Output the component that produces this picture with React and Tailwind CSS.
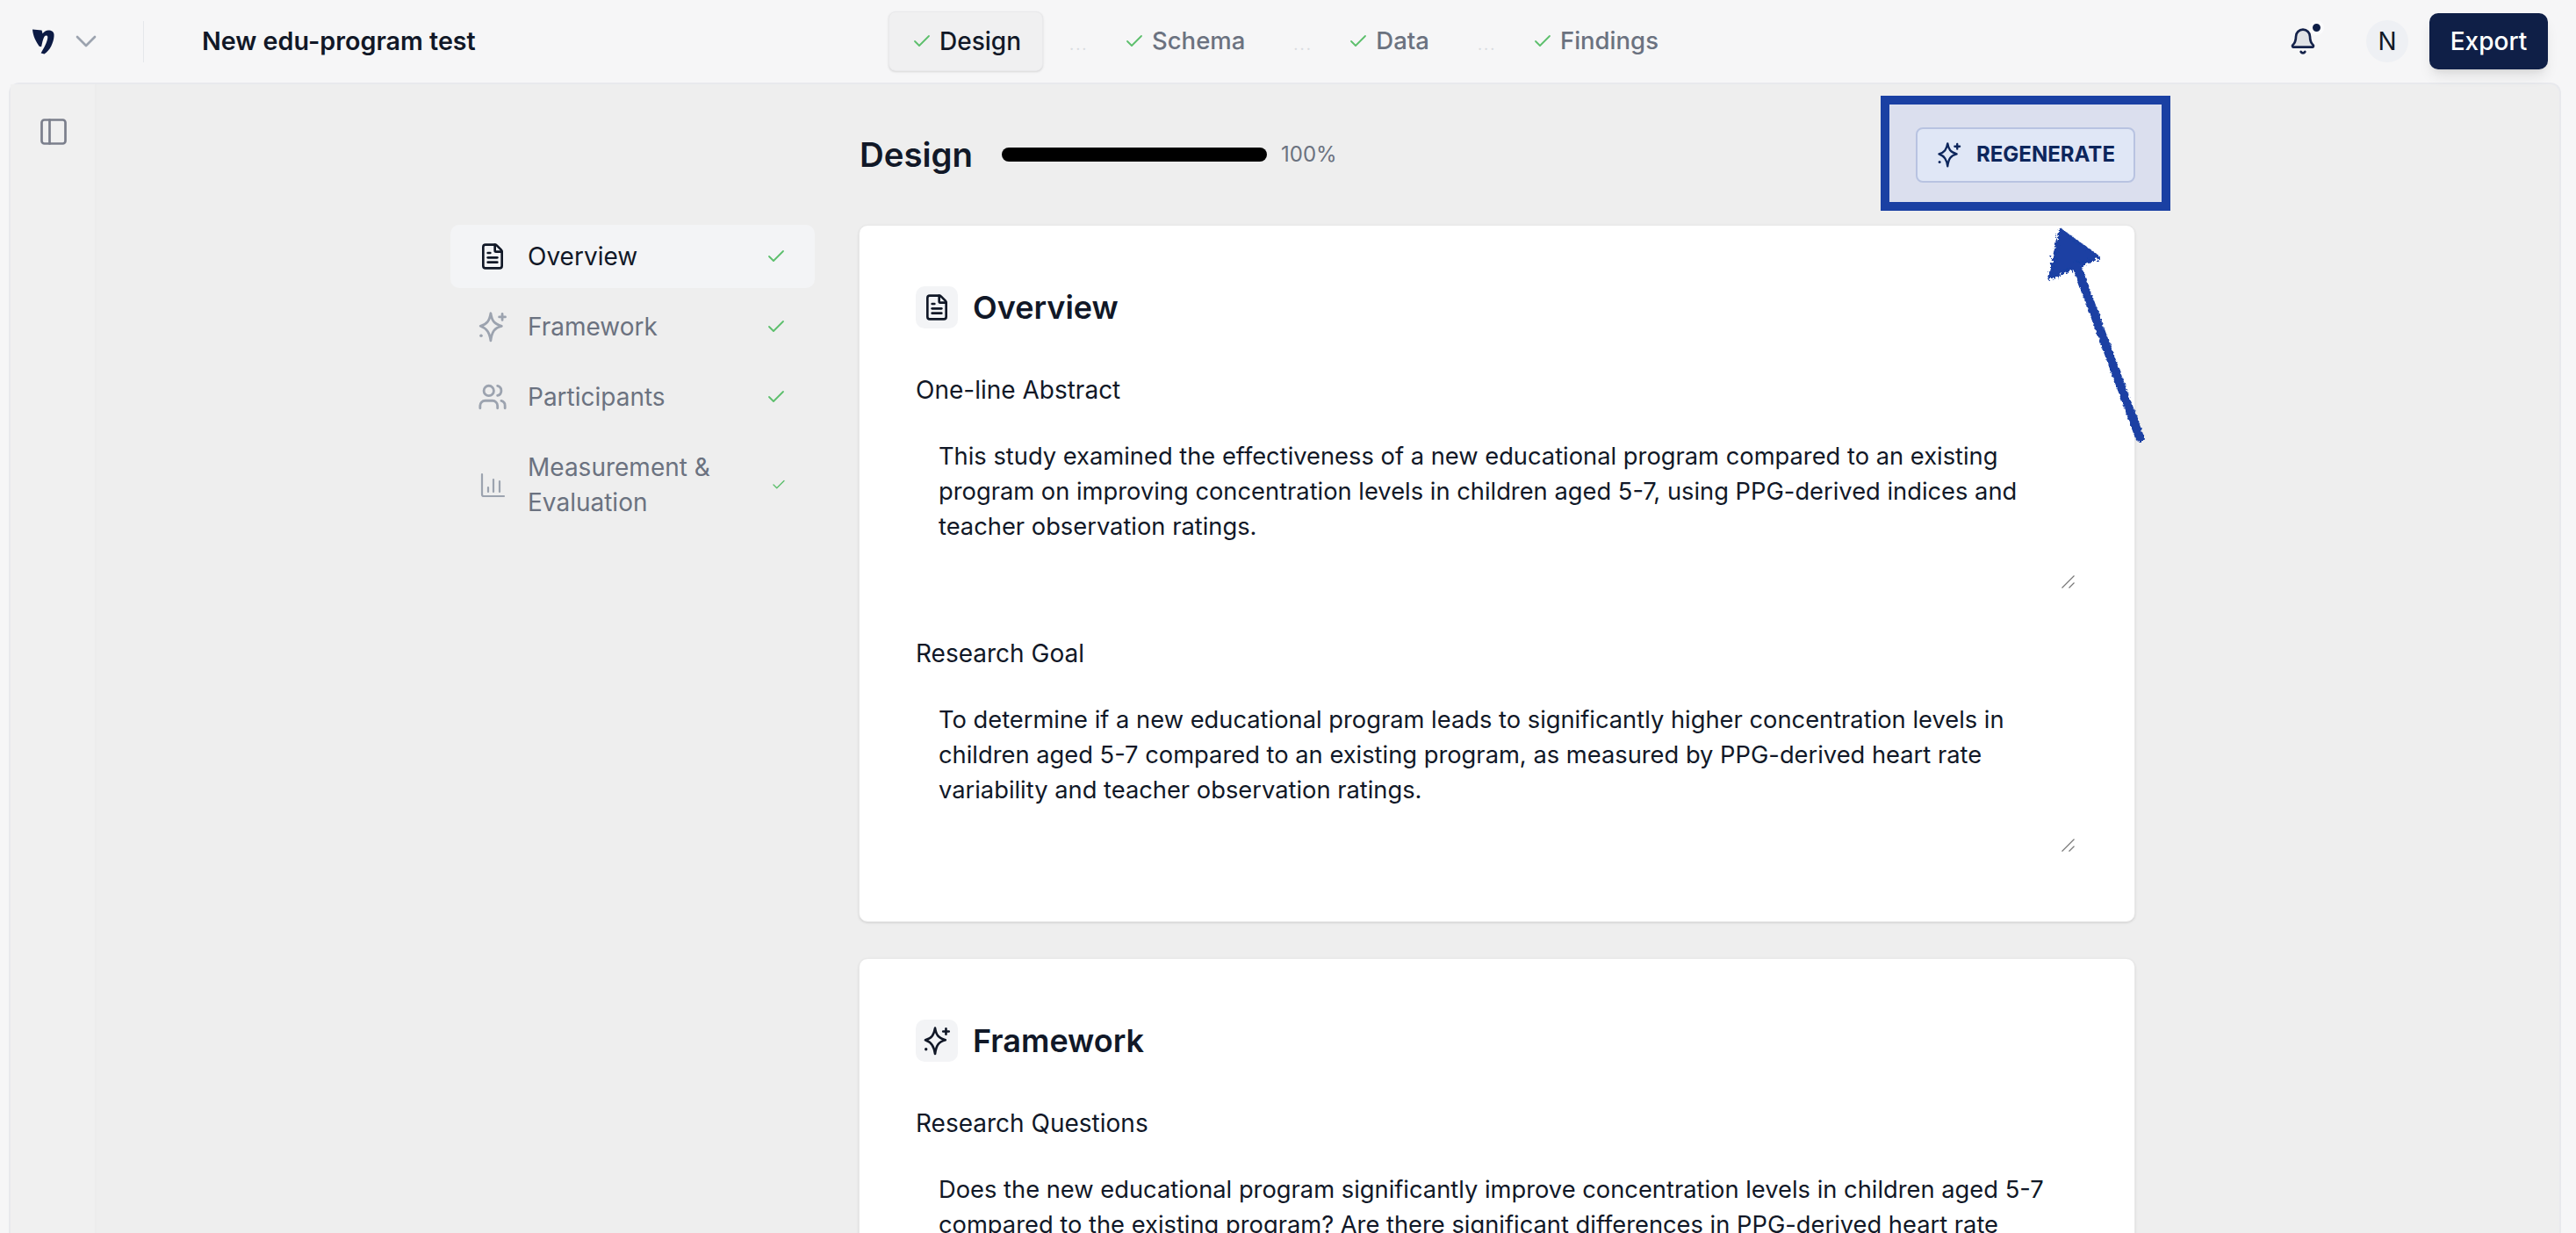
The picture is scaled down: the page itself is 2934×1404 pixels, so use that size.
import { Bell, Check, ChevronDown, FileText, PanelLeft, Users } from 'lucide-react'

const font = { fontFamily: 'Inter, sans-serif' }

function Sparkle({ className }) {
  return (
    <svg viewBox="0 0 26 26" fill="none" stroke="currentColor" strokeWidth="2" strokeLinejoin="round" strokeLinecap="round" className={className}>
      <path d="M11.5 2 C12.5 8 14 10.5 20.5 12.5 C14.5 14 12.5 17 11.5 24.5 C10.5 18 8.5 14.5 3 12.5 C8.5 11 10.5 8 11.5 2 Z" />
      <path d="M21 2.5v5M18.5 5h5" />
      <circle cx="3.6" cy="20.4" r="1.3" fill="currentColor" stroke="none" />
    </svg>
  )
}

function Bars({ className }) {
  return (
    <svg viewBox="0 0 36 36" fill="none" stroke="currentColor" strokeWidth="2.2" strokeLinecap="round" className={className}>
      <path d="M6 6v23a2 2 0 0 0 2 2h23" />
      <path d="M13 26v-5M19 26V12M26 26V14" />
    </svg>
  )
}

const steps = [
  { label: 'Design', active: true },
  { label: 'Schema' },
  { label: 'Data' },
  { label: 'Findings' },
]

const nav = [
  { label: 'Overview', Icon: FileText, active: true, size: 'mx-[2px] h-[32px] w-[32px]' },
  { label: 'Framework', Icon: Sparkle, size: 'h-[36px] w-[36px]' },
  { label: 'Participants', Icon: Users, size: 'mx-px h-[34px] w-[34px]' },
  { label: 'Measurement & Evaluation', Icon: Bars, small: true, size: 'h-[36px] w-[36px]' },
]

function Field({ label, value }) {
  return (
    <div>
      <div className="text-[28px] leading-[40px] text-[#111827]">{label}</div>
      <div className="relative mt-[20px] w-[1323px]">
        <textarea
          readOnly
          defaultValue={value}
          className="block h-[188px] w-full resize-none px-[26px] py-[16px] text-[27.3px] leading-[40px] text-[#111827] outline-none"
        />
        <svg viewBox="0 0 15 15" className="absolute bottom-[2px] right-[3px] h-[15px] w-[15px] text-[#777777]" fill="none" stroke="currentColor" strokeWidth="1.2">
          <path d="M0.5 14.5 L14.5 0.5M8.5 14.5 L14.5 8.5" />
        </svg>
      </div>
    </div>
  )
}

function Card({ title, Icon, iconClass, children }) {
  return (
    <div className="rounded-[10px] border border-[#e9e9e9] bg-white pl-[64px] pr-[40px] pt-[69px] pb-[77px] shadow-sm">
      <div className="mb-[50px] flex items-center gap-[17px]">
        <div className="flex h-[48px] w-[48px] items-center justify-center rounded-[10px] bg-[#f3f4f6] text-[#111827]">
          <Icon className={iconClass} />
        </div>
        <div className="text-[36px] font-semibold leading-[48px] text-[#111827]">{title}</div>
      </div>
      {children}
    </div>
  )
}

export default function App() {
  return (
    <div style={font} className="relative h-[1404px] w-[2934px] overflow-hidden bg-[#f6f6f7]">
      <header className="flex h-[94px] items-center">
        <div className="flex w-[1012px] shrink-0 items-center">
          <svg viewBox="0 0 26 30" className="ml-[37px] h-[30px] w-[25px] text-[#0c1a44]" fill="currentColor">
            <path d="M0 1 L11 2 L12 6 C14 3 17 1.5 20 2 C24 2.5 26 5 25.5 9 C25 16 21 26 14 30 L10 29 C13 24 18 15 18 10 C18 8 15.5 7.5 14 9.5 C12.5 12 11.5 17 10.5 21.5 L8 21 C4.5 16 0.5 9 0 1 Z" />
          </svg>
          <ChevronDown className="ml-[16px] h-[40px] w-[40px] text-[#9ca3af]" strokeWidth={1.6} />
          <div className="ml-[45px] h-[47px] w-px bg-[#e5e7eb]" />
          <div className="ml-[66px] text-[28.7px] font-semibold text-[#111827]">New edu-program test</div>
        </div>
        <nav className="flex items-center">
          {steps.map((s, i) => (
            <div key={s.label} className="flex items-center">
              {i > 0 && <span className="ml-[30px] mr-[18px] mt-[8px] w-[19px] text-[18px] leading-none tracking-[2px] text-[#d8dbe0]">...</span>}
              <div className={s.active ? 'flex h-[68px] items-center gap-[8px] rounded-[8px] border border-[#e9e9eb] bg-[#f0f0f1] pl-[25px] pr-[24px] shadow-sm' : 'flex h-[68px] items-center gap-[8px] px-[25px]'}>
                <Check className="h-[24px] w-[24px] text-[#5cbf6c]" strokeWidth={1.8} />
                <span className={s.active ? 'text-[28px] font-medium text-[#111827]' : 'text-[27.5px] font-medium text-[#6b7280]'}>{s.label}</span>
              </div>
            </div>
          ))}
        </nav>
        <div className="ml-auto flex items-center pr-[32px]">
          <div className="relative mr-[56px]">
            <Bell className="h-[32px] w-[32px] fill-[#e0e2e6] text-[#14224a]" strokeWidth={2} />
            <span className="box-content absolute -right-[8px] -top-[8px] h-[9px] w-[9px] rounded-full border-[4px] border-[#fbfbfc] bg-[#0f1f47]" />
          </div>
          <div className="mr-[24px] flex h-[48px] w-[48px] items-center justify-center rounded-full bg-[#eef0f4] text-[28px] text-[#111827]">N</div>
          <button className="flex h-[64px] w-[135px] items-center justify-center rounded-[10px] bg-[#0f1f47] text-[28px] font-medium text-white shadow-lg">Export</button>
        </div>
      </header>

      <main className="ml-[10px] mr-[17px] flex h-[1310px] rounded-tl-[12px] rounded-tr-[12px] border-l-2 border-r-2 border-t-2 border-[#e8e9ed] bg-[#eeeeee]">
        <div className="flex w-[98px] shrink-0 justify-center border-r-2 border-[#ececec] bg-[#f0f0f0] pl-[2px] pt-[36px]">
          <PanelLeft className="h-[36px] w-[36px] text-[#7b7f8c]" strokeWidth={1.8} />
        </div>

        <div className="ml-[403px] w-[1919px] shrink-0">
          <div className="ml-[466px] flex h-[160px] items-center">
            <div className="pt-[2px] text-[38.4px] font-semibold text-[#111827]">Design</div>
            <div className="ml-[33px] h-[16px] w-[302px] rounded-full bg-black" />
            <div className="ml-[16px] text-[24px] text-[#6b7280]">100%</div>
            <button className="ml-auto flex h-[63px] w-[250px] items-center justify-center gap-[16px] rounded-[8px] border-2 border-[#c8d0e0] bg-[#f3f7f7] text-[24px] font-bold text-[#0f2550]">
              <Sparkle className="h-[30px] w-[30px]" />
              REGENERATE
            </button>
          </div>

          <div className="flex gap-[50px]">
            <div className="w-[415px] shrink-0 space-y-[8px]">
              {nav.map(({ label, Icon, active, small, size }) => (
                <div key={label} className={active ? 'flex min-h-[72px] items-center rounded-[10px] bg-[#f3f4f6] pl-[30px] pr-[32px] py-[16px]' : 'flex min-h-[72px] items-center rounded-[10px] pl-[30px] pr-[32px] py-[16px]'}>
                  <Icon className={`${size} shrink-0 ${active ? 'text-[#111827]' : 'text-[#9ca3af]'}`} strokeWidth={2} />
                  <span className={active ? 'ml-[22px] flex-1 text-[28px] leading-[40px] text-[#111827]' : 'ml-[22px] flex-1 text-[28px] leading-[40px] text-[#6b7280]'}>{label}</span>
                  <Check className={small ? 'h-[18px] w-[18px] shrink-0 text-[#5cbf6c]' : 'h-[24px] w-[24px] shrink-0 text-[#5cbf6c]'} strokeWidth={1.8} />
                </div>
              ))}
            </div>

            <div className="w-[1454px] shrink-0 space-y-[41px]">
              <Card title="Overview" Icon={FileText} iconClass="h-[32px] w-[32px]">
                <Field
                  label="One-line Abstract"
                  value="This study examined the effectiveness of a new educational program compared to an existing program on improving concentration levels in children aged 5-7, using PPG-derived indices and teacher observation ratings."
                />
                <div className="mt-[52px]">
                  <Field
                    label="Research Goal"
                    value="To determine if a new educational program leads to significantly higher concentration levels in children aged 5-7 compared to an existing program, as measured by PPG-derived heart rate variability and teacher observation ratings."
                  />
                </div>
              </Card>
              <Card title="Framework" Icon={Sparkle} iconClass="h-[34px] w-[34px]">
                <Field
                  label="Research Questions"
                  value="Does the new educational program significantly improve concentration levels in children aged 5-7 compared to the existing program? Are there significant differences in PPG-derived heart rate variability between the two groups?"
                />
              </Card>
            </div>
          </div>
        </div>
      </main>

      {/* annotation drawn on top of the screenshot */}
      <div className="absolute left-[2142px] top-[109px] h-[131px] w-[330px] border-[10px] border-[#1a40a3] bg-[#0030ee]/8" />
      <svg className="absolute left-[2300px] top-[240px] h-[290px] w-[160px]" viewBox="0 0 160 290">
        <defs>
          <filter id="rough" x="-20%" y="-20%" width="140%" height="140%">
            <feTurbulence type="fractalNoise" baseFrequency="0.3" numOctaves="3" seed="4" />
            <feDisplacementMap in="SourceGraphic" scale="7" />
          </filter>
        </defs>
        <g filter="url(#rough)" fill="#1a40a3" stroke="#1a40a3" strokeLinejoin="round">
          <path d="M47 22 L90 53 L34 77 Z" strokeWidth="4" />
          <path d="M65 62 L137 258" strokeWidth="10" strokeLinecap="round" fill="none" />
        </g>
      </svg>
    </div>
  )
}
